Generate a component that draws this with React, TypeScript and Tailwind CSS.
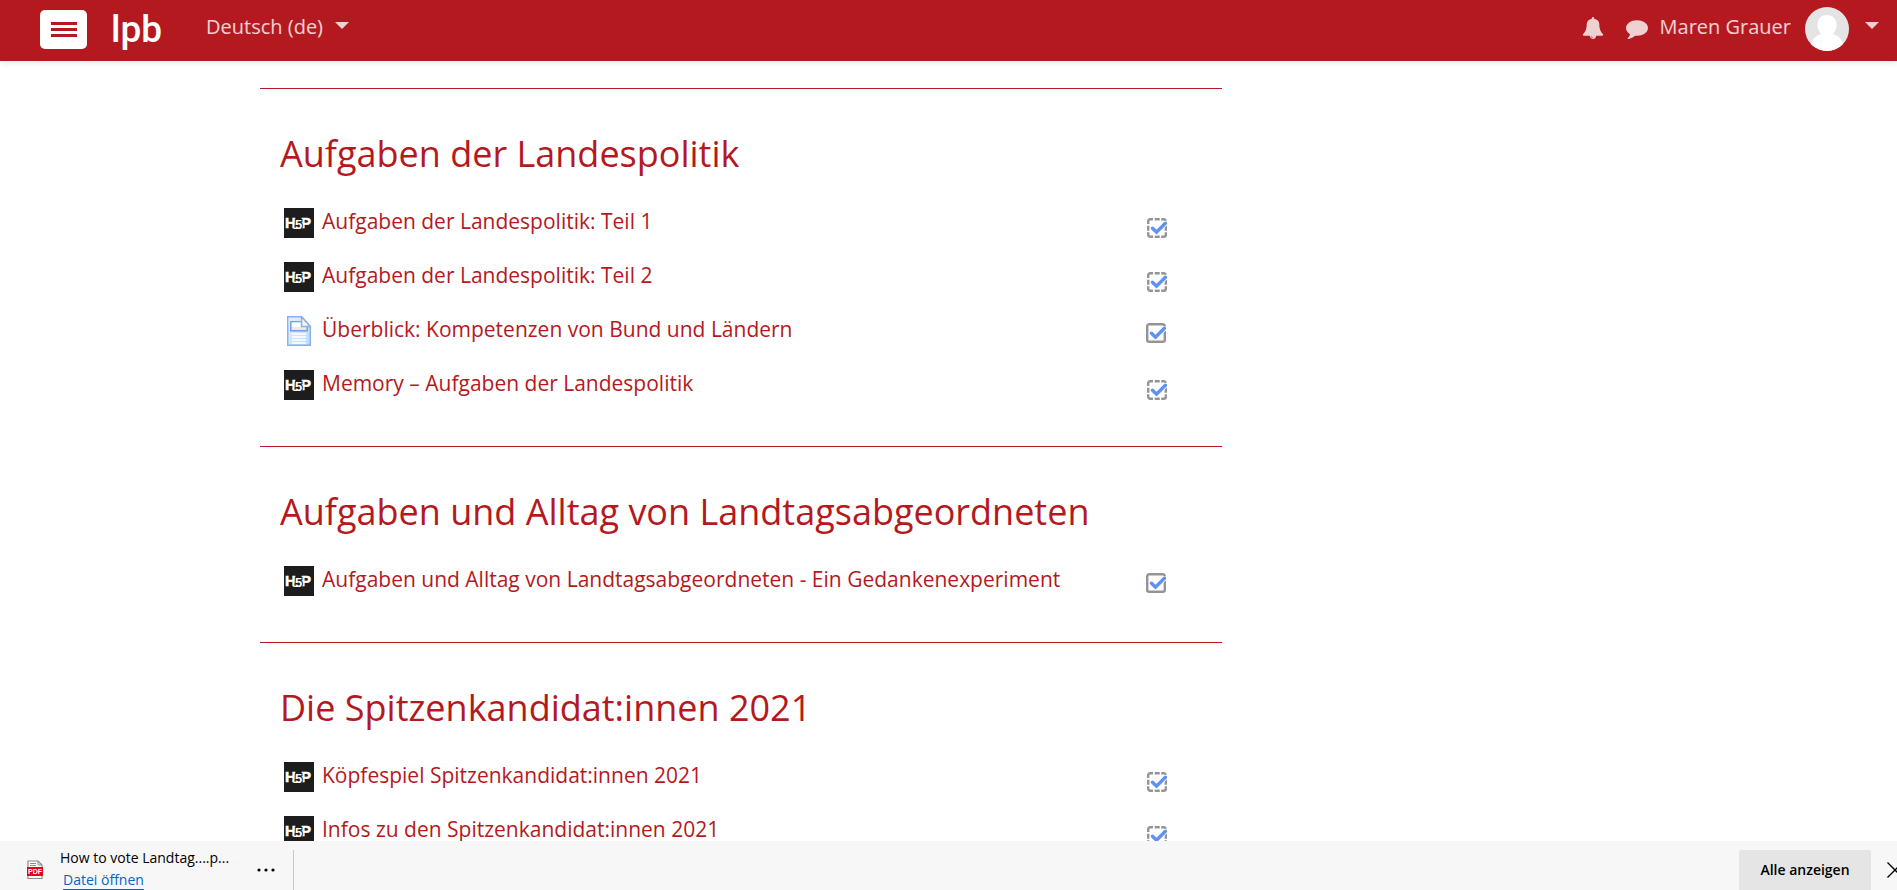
import React from "react";

type Activity = {
  title: string;
  kind: "h5p" | "page";
  completion: "manual" | "auto";
};

type Section = {
  title: string;
  activities: Activity[];
};

const sections: Section[] = [
  {
    title: "Aufgaben der Landespolitik",
    activities: [
      { title: "Aufgaben der Landespolitik: Teil 1", kind: "h5p", completion: "auto" },
      { title: "Aufgaben der Landespolitik: Teil 2", kind: "h5p", completion: "auto" },
      { title: "Überblick: Kompetenzen von Bund und Ländern", kind: "page", completion: "manual" },
      { title: "Memory – Aufgaben der Landespolitik", kind: "h5p", completion: "auto" },
    ],
  },
  {
    title: "Aufgaben und Alltag von Landtagsabgeordneten",
    activities: [
      {
        title: "Aufgaben und Alltag von Landtagsabgeordneten - Ein Gedankenexperiment",
        kind: "h5p",
        completion: "manual",
      },
    ],
  },
  {
    title: "Die Spitzenkandidat:innen 2021",
    activities: [
      { title: "Köpfespiel Spitzenkandidat:innen 2021", kind: "h5p", completion: "auto" },
      { title: "Infos zu den Spitzenkandidat:innen 2021", kind: "h5p", completion: "auto" },
    ],
  },
];

function H5PIcon() {
  return (
    <svg viewBox="0 0 30 30" className="size-[30px] shrink-0" aria-hidden="true">
      <rect width="30" height="30" fill="#1d1d1d" />
      <g fontFamily="Liberation Sans, sans-serif" fontWeight="700" fill="#fff">
        <text x="1" y="20" fontSize="15" stroke="#fff" strokeWidth=".5">H</text>
        <text x="17" y="20" fontSize="15" stroke="#fff" strokeWidth=".5">P</text>
        <text x="11" y="21" fontSize="13" stroke="#1d1d1d" strokeWidth="2" paintOrder="stroke">5</text>
      </g>
      <path d="M9.5 20.4h4" stroke="#fff" strokeWidth="1.2" />
    </svg>
  );
}

function PageIcon() {
  return (
    <svg viewBox="0 0 30 30" className="size-[30px] shrink-0" aria-hidden="true">
      <defs>
        <linearGradient id="sheet" x1="0" y1="0" x2="1" y2="1">
          <stop offset="0" stopColor="#e4f1fd" />
          <stop offset="1" stopColor="#b9dbfb" />
        </linearGradient>
      </defs>
      <path d="M3.7.7h14l8.6 9.6v19H3.7z" fill="url(#sheet)" stroke="#86b0ee" strokeWidth="1.4" />
      <path d="M7 6.2h9.5v8.6H7z" fill="#fff" />
      <path d="M7 11h16v3.6H7z" fill="#f4ead0" />
      <path d="M16.6 5.6H6.8v9.2h16.4v-4" fill="none" stroke="#6d9ee8" strokeWidth="1.4" />
      <path d="M17.6.9v9.6h8.6z" fill="#eef7ff" stroke="#86b0ee" strokeWidth="1.4" />
      <path d="M8 18h14M8 21h14M8 24h14M8 27h14" stroke="#fff" strokeWidth="1.4" />
    </svg>
  );
}

function CompletionIcon({ dashed }: { dashed: boolean }) {
  return (
    <svg viewBox="0 0 20 20" className="size-5" aria-hidden="true">
      {dashed ? (
        <path
          d="M1.2 6V3.2a2 2 0 0 1 2-2H6M7.7 1.2h5M14.2 1.2h2.6a2 2 0 0 1 2 1.5M18.8 7.7v5M18.8 14.2v2.6a2 2 0 0 1-2 2h-2.6M12.7 18.8h-5M6 18.8H3.2a2 2 0 0 1-2-2V14.2M1.2 12.7v-5"
          fill="none"
          stroke="#949494"
          strokeWidth="2.4"
        />
      ) : (
        <path
          d="M18.8 3.2a2 2 0 0 0-2-2H3.2a2 2 0 0 0-2 2v13.6a2 2 0 0 0 2 2h13.6a2 2 0 0 0 2-2V8"
          fill="none"
          stroke="#949494"
          strokeWidth="2.4"
        />
      )}
      <path d="M5.5 10.3l4 3.9 9-9" fill="none" stroke="#fff" strokeWidth="5" />
      <path d="M5.5 10.3l4 3.9 8.9-8.9" fill="none" stroke="#5f92f2" strokeWidth="3.4" strokeLinecap="round" />
    </svg>
  );
}

function Caret() {
  return (
    <svg viewBox="0 0 14 7" className="h-[7px] w-3.5" fill="currentColor" aria-hidden="true">
      <path d="M0 0h14L7 7z" />
    </svg>
  );
}

function Header() {
  return (
    <header className="relative z-10 flex h-[61px] shrink-0 items-start bg-[#b51920] pl-10 pr-[18px] text-xl text-white/80 shadow-[0_2px_6px_rgba(0,0,0,0.1)]">
      <button
        type="button"
        aria-label="Website-Übersicht"
        className="mt-2.5 flex h-[39px] w-[47px] flex-col items-center justify-center gap-[3px] rounded-[5px] bg-white"
      >
        <span className="h-[3px] w-[26px] bg-[#b51920]" />
        <span className="h-[3px] w-[26px] bg-[#b51920]" />
        <span className="h-[3px] w-[26px] bg-[#b51920]" />
      </button>
      <a
        href="#"
        className="ml-6 mt-2 font-[Roboto,sans-serif] text-[37px] font-medium leading-[44px] text-white"
      >
        lpb
      </a>
      <button type="button" className="ml-11 mt-3 flex items-start gap-3 leading-[30px]">
        Deutsch (de)
        <span className="mt-2.5 flex">
          <Caret />
        </span>
      </button>
      <div className="ml-auto flex items-start">
        <button type="button" aria-label="Mitteilungen" className="mt-[17px]">
          <svg viewBox="0 0 1792 1792" className="size-[22px]" fill="currentColor" aria-hidden="true">
            <path d="M912 1696q0-16-16-16-59 0-101.5-42.5t-42.5-101.5q0-16-16-16t-16 16q0 73 51.5 124.5t124.5 51.5q16 0 16-16zm816-288q0 52-38 90t-90 38h-448q0 106-75 181t-181 75-181-75-75-181h-448q-52 0-90-38t-38-90q50-42 91-88t85-119.5 74.5-158.5 50-206 19.5-260q0-152 117-282.5t307-158.5q-8-19-8-39 0-40 28-68t68-28 68 28 28 68q0 20-8 39 190 28 307 158.5t117 282.5q0 139 19.5 260t50 206 74.5 158.5 85 119.5 91 88z" />
          </svg>
        </button>
        <button type="button" aria-label="Nachrichten" className="ml-[22px] mt-[17px]">
          <svg viewBox="0 0 1792 1792" className="size-[22px]" fill="currentColor" aria-hidden="true">
            <path d="M1792 896q0 174-120 321.5t-326 233-450 85.5q-70 0-145-8-198 175-460 242-49 14-114 22-17 2-30.5-9t-17.5-29v-1q-3-4-.5-12t2-10 4.5-9.5l6-9 7-8.5 8-9q7-8 31-34.5t34.5-38 31-39.5 32.5-51 27-59 26-76q-157-89-247.5-220t-90.5-281q0-130 71-248.5t191-204.5 286-136.5 348-50.5q244 0 450 85.5t326 233 120 321.5z" />
          </svg>
        </button>
        <button type="button" className="ml-3 flex items-start">
          <span className="mt-3 leading-[30px]">Maren Grauer</span>
          <svg viewBox="0 0 44 44" className="ml-3.5 mt-[7px] size-11 rounded-full" aria-hidden="true">
            <rect width="44" height="44" fill="#e4e4e4" />
            <path
              d="M22 8c6 0 9.6 4.2 9.6 10 0 3.6-1.4 7-4 9 5 1 9 4.5 11 10.5L36 44H8l-2.5-6.5C7.5 31.5 11.5 28 16.5 27c-2.6-2-4.1-5.4-4.1-9C12.4 12.2 16 8 22 8z"
              fill="#fff"
            />
          </svg>
          <span className="ml-4 mt-[22px]">
            <Caret />
          </span>
        </button>
      </div>
    </header>
  );
}

function ActivityRow({ activity }: { activity: Activity }) {
  const manual = activity.completion === "manual";
  return (
    <li className="flex h-[30px] items-start justify-between pl-6 pr-[55px]">
      <a href="#" className="flex items-start gap-2 text-[21px] leading-[26px]">
        {activity.kind === "h5p" ? <H5PIcon /> : <PageIcon />}
        {activity.title}
      </a>
      {manual ? (
        <button type="button" aria-label={`Als erledigt kennzeichnen: ${activity.title}`} className="mr-px mt-[7px]">
          <CompletionIcon dashed={false} />
        </button>
      ) : (
        <span className="mt-2.5">
          <CompletionIcon dashed />
        </span>
      )}
    </li>
  );
}

function DownloadBar() {
  return (
    <footer className="flex h-[49px] shrink-0 items-start overflow-hidden bg-[#f7f7f7] font-['Open_Sans',sans-serif] text-sm text-black">
      <svg viewBox="0 0 18 20" className="ml-[26px] mt-[19px] h-5 w-[18px] shrink-0" aria-hidden="true">
        <path d="M2 1h10l4 4v13.5H2z" fill="#fff" stroke="#8c8c8c" strokeWidth="1.2" />
        <path d="M12 1v4h4M4 3.5h6M4 5.5h6" fill="none" stroke="#8c8c8c" />
        <rect x="1" y="7" width="16" height="9" fill="#e2001a" />
        <text x="9" y="14" textAnchor="middle" fontFamily="Liberation Sans, sans-serif" fontWeight="700" fontSize="7" fill="#fff">
          PDF
        </text>
      </svg>
      <div className="ml-4 mt-1.5">
        <div className="leading-[22px]">How to vote Landtag....p...</div>
        <a href="#" className="ml-[3px] block leading-[22px] text-[#0067c0] underline underline-offset-4">
          Datei öffnen
        </a>
      </div>
      <button type="button" aria-label="Weitere Optionen" className="ml-7 mt-[27px]">
        <svg viewBox="0 0 18 4" className="h-1 w-[18px]" aria-hidden="true">
          <circle cx="2" cy="2" r="1.6" />
          <circle cx="9" cy="2" r="1.6" />
          <circle cx="16" cy="2" r="1.6" />
        </svg>
      </button>
      <span className="ml-[18px] mt-[9px] h-10 w-px bg-[#c8c8c8]" />
      <button
        type="button"
        className="ml-auto mt-[9px] h-10 w-[132px] shrink-0 rounded-t-xs bg-[#e5e5e5] font-semibold"
      >
        Alle anzeigen
      </button>
      <button type="button" aria-label="Schließen" className="-mr-1.5 ml-4 mt-[21px] shrink-0">
        <svg viewBox="0 0 16 16" className="size-4" fill="none" stroke="#000" strokeWidth="1.4" aria-hidden="true">
          <path d="M.5.5l15 15M15.5.5l-15 15" />
        </svg>
      </button>
    </footer>
  );
}

export default function App() {
  return (
    <div className="flex h-screen flex-col bg-white font-['Open_Sans',sans-serif]">
      <Header />
      <main className="min-h-0 flex-1 overflow-hidden pl-[260px] pr-[675px] pt-[27px] text-[#b51920]">
        {sections.map((section) => (
          <section key={section.title} className="border-t border-[#b51920] pb-[46px] pt-[41px]">
            <h2 className="mb-[30px] pl-5 text-4xl leading-[48px]">{section.title}</h2>
            <ul className="flex flex-col gap-6">
              {section.activities.map((activity) => (
                <ActivityRow key={activity.title} activity={activity} />
              ))}
            </ul>
          </section>
        ))}
      </main>
      <DownloadBar />
    </div>
  );
}
